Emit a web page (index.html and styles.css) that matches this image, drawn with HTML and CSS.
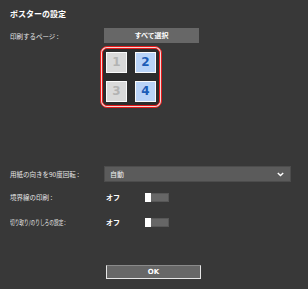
FILE: index.html
```html
<!DOCTYPE html>
<html lang="ja">
<head>
<meta charset="utf-8">
<link rel="stylesheet" href="styles.css">
</head>
<body>
<div class="panel">
  <div class="title">ポスターの設定</div>
  <div class="row row-pages">
    <div class="label">印刷するページ :</div>
    <div class="btn">すべて選択</div>
  </div>
  <div class="frame">
    <div class="frame-inner">
      <div class="tile off">1</div>
      <div class="tile on">2</div>
      <div class="tile off">3</div>
      <div class="tile on">4</div>
    </div>
  </div>
  <div class="row row-rotate">
    <div class="label">用紙の向きを90度回転 :</div>
    <div class="select">
      <span>自動</span>
      <svg class="chev" width="7" height="5" viewBox="0 0 7 5"><path d="M0.8 1 L3.5 3.6 L6.2 1" fill="none" stroke="#fff" stroke-width="1.4"/></svg>
    </div>
  </div>
  <div class="row row-toggle first">
    <div class="label">境界線の印刷 :</div>
    <div class="value">オフ</div>
    <div class="toggle"><div class="knob"></div></div>
  </div>
  <div class="row row-toggle second">
    <div class="label"><span class="narrow">切り取り/のりしろの設定 :</span></div>
    <div class="value">オフ</div>
    <div class="toggle"><div class="knob"></div></div>
  </div>
  <div class="ok">OK</div>
</div>
</body>
</html>
```

FILE: styles.css
```css
html, body {
  margin: 0;
  padding: 0;
}
body {
  background: #383838;
  color: #fff;
  font-family: "Noto Sans CJK JP", "Noto Sans", sans-serif;
  width: 308px;
  height: 289px;
  overflow: hidden;
}
.panel {
  box-sizing: border-box;
  width: 308px;
  height: 289px;
  padding: 7px 17px 0 10px;
}
.title {
  font-size: 8px;
  font-weight: bold;
  line-height: 14px;
  height: 14px;
}
.row {
  display: grid;
  grid-template-columns: 94px auto;
  align-items: center;
}
.label {
  font-size: 6.5px;
  color: #e6e6e6;
  line-height: 10px;
  white-space: nowrap;
}
.narrow {
  display: inline-block;
  transform: scaleX(0.72);
  transform-origin: left center;
}
.row-pages {
  margin-top: 7px;
  grid-template-columns: 94px 95px;
}
.btn {
  height: 15px;
  background: #676767;
  font-size: 7px;
  font-weight: bold;
  line-height: 15px;
  text-align: center;
}
.frame {
  margin: 3px 0 0 90px;
  width: 62px;
  height: 62px;
  box-sizing: border-box;
  border: 1px solid #e51a1a;
  border-radius: 7px;
  padding: 1px;
  background: #f3d6d6;
}
.frame-inner {
  box-sizing: border-box;
  width: 100%;
  height: 100%;
  border: 1px solid #e51a1a;
  border-radius: 5px;
  background: #2c2c2c;
  padding: 2px 2px;
  display: grid;
  grid-template-columns: 21px 21px;
  grid-template-rows: 21px 21px;
  gap: 8px;
  justify-content: center;
  align-content: center;
}
.tile {
  box-sizing: border-box;
  border: 1px solid #fafafa;
  font-family: "DejaVu Sans", sans-serif;
  font-weight: bold;
  font-size: 12px;
  line-height: 19px;
  text-align: center;
}
.tile.off {
  background: #d9d9d9;
  color: #b3b3b3;
}
.tile.on {
  background: #b9d3f7;
  color: #1c5cb6;
}
.row-rotate {
  margin-top: 58px;
  grid-template-columns: 94px 187px;
}
.select {
  box-sizing: border-box;
  height: 16px;
  background: #5b5b5b;
  border: 1px solid #4c4c4c;
  display: flex;
  align-items: center;
  justify-content: space-between;
  padding: 0 6px 0 5px;
  font-size: 7px;
  color: #f0f0f0;
}
.chev {
  display: block;
}
.row-toggle {
  grid-template-columns: 96px 39px 24px;
  height: 10px;
}
.row-toggle.first {
  margin-top: 10px;
}
.row-toggle.second {
  margin-top: 15px;
}
.value {
  font-size: 7px;
  font-weight: bold;
  line-height: 10px;
}
.toggle {
  box-sizing: border-box;
  width: 24px;
  height: 9px;
  background: #666;
  border: 1px solid #575757;
  display: flex;
}
.knob {
  width: 6px;
  height: 9px;
  margin: -1px 0 0 -1px;
  background: #fff;
}
.ok {
  box-sizing: border-box;
  margin: 38px 0 0 96px;
  width: 95px;
  height: 14px;
  background: #676767;
  border: 1px solid #e6e6e6;
  border-top-color: #8a8a8a;
  font-family: "DejaVu Sans", sans-serif;
  font-size: 7px;
  font-weight: bold;
  line-height: 12px;
  text-align: center;
}
```
